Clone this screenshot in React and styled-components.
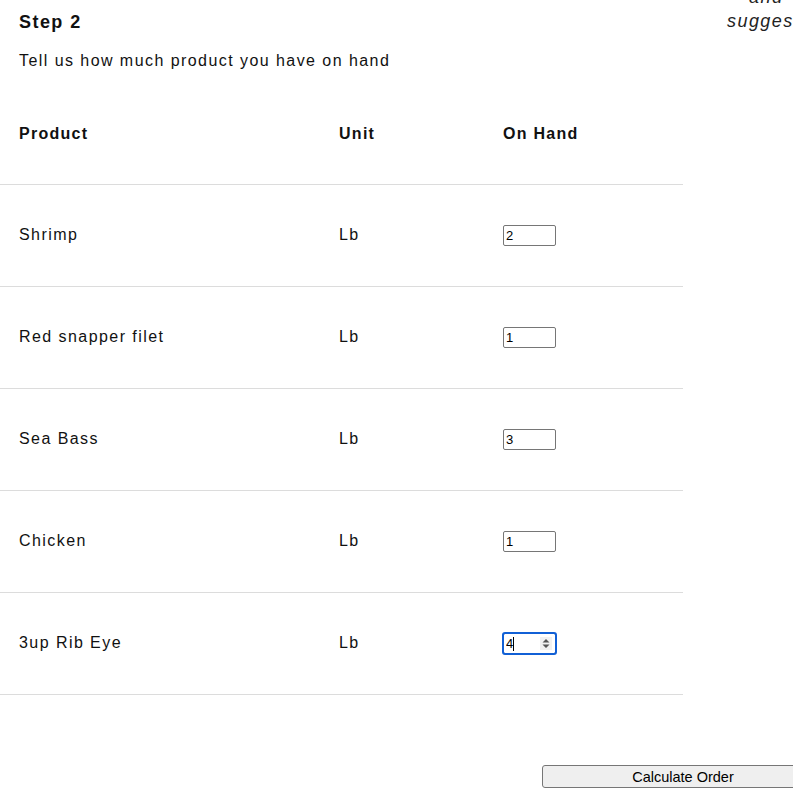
import styled, { createGlobalStyle } from 'styled-components'

const GlobalStyle = createGlobalStyle`
  html, body {
    margin: 0;
    padding: 0;
    overflow: hidden;
    background: #fff;
  }
  body {
    font-family: "Liberation Sans", Arial, sans-serif;
    color: #111;
  }
`

const Page = styled.div`
  width: 1366px;
`

const Columns = styled.div`
  display: flex;
`

const Form = styled.section`
  width: 683px;
  flex: none;
`

const Title = styled.h2`
  margin: 11px 0 0;
  padding: 0 19px;
  font-size: 18px;
  line-height: 22px;
  font-weight: 700;
  letter-spacing: 0.08em;
`

const Lead = styled.p`
  margin: 16px 0 0;
  padding: 0 19px;
  font-size: 16px;
  line-height: 24px;
  letter-spacing: 0.09em;
`

const Table = styled.table`
  margin-top: 11px;
  width: 683px;
  border-collapse: collapse;
  table-layout: fixed;
  font-size: 16px;
  letter-spacing: 0.09em;
`

const Th = styled.th`
  box-sizing: border-box;
  width: ${p => p.$w}px;
  height: 100px;
  padding: 1px 19px 0;
  text-align: left;
  font-weight: 700;
  letter-spacing: 0.08em;
  border-bottom: 1px solid #dcdcdc;
`

const Td = styled.td`
  height: 101px;
  padding: 0 19px;
  border-bottom: 1px solid #dcdcdc;
`

const Field = styled.div`
  position: relative;
  display: inline-block;
  vertical-align: middle;
`

const Qty = styled.input`
  box-sizing: border-box;
  width: 53px;
  height: 21px;
  margin: 0;
  padding: 0 2px;
  font: 13px "Liberation Sans", Arial, sans-serif;
  color: #000;
  border: 1px solid #767676;
  border-radius: 2px;
  outline: ${p => (p.$active ? '2px solid #1160d6' : 'none')};
  outline-offset: -1px;
  -moz-appearance: textfield;

  &::-webkit-inner-spin-button,
  &::-webkit-outer-spin-button {
    -webkit-appearance: none;
    margin: 0;
  }
`

const Spinner = styled.svg`
  position: absolute;
  right: 4px;
  top: 4px;
  width: 12px;
  height: 13px;
  background: #f1f1f1;
  pointer-events: none;
`

const Caret = styled.span`
  position: absolute;
  left: 10px;
  top: 4px;
  width: 1px;
  height: 14px;
  background: #000;
`

const Aside = styled.aside`
  margin-top: -15px;
  padding-left: 44px;
  font-size: 18px;
  line-height: 24px;
  font-style: italic;
  letter-spacing: 0.08em;
  color: #222;
`

const AsideLine = styled.div`
  padding-left: ${p => p.$indent || 0}px;
  white-space: nowrap;
`

const Footer = styled.div`
  display: flex;
  justify-content: center;
  margin-top: 70px;
`

const Button = styled.button`
  width: 282px;
  height: 23px;
  padding: 1px 0 0;
  font: 14.5px "Liberation Sans", Arial, sans-serif;
  color: #000;
  background: #efefef;
  border: 1px solid #767676;
  border-radius: 3px;
`

const products = [
  { name: 'Shrimp', unit: 'Lb', qty: 2 },
  { name: 'Red snapper filet', unit: 'Lb', qty: 1 },
  { name: 'Sea Bass', unit: 'Lb', qty: 3 },
  { name: 'Chicken', unit: 'Lb', qty: 1 },
  { name: '3up Rib Eye', unit: 'Lb', qty: 4, active: true },
]

export default function App() {
  return (
    <Page>
      <GlobalStyle />
      <Columns>
        <Form>
          <Title>Step 2</Title>
          <Lead>Tell us how much product you have on hand</Lead>
          <Table>
            <thead>
              <tr>
                <Th $w={320}>Product</Th>
                <Th $w={164}>Unit</Th>
                <Th $w={199}>On Hand</Th>
              </tr>
            </thead>
            <tbody>
              {products.map(p => (
                <tr key={p.name}>
                  <Td>{p.name}</Td>
                  <Td>{p.unit}</Td>
                  <Td>
                    <Field>
                      <Qty type="number" defaultValue={p.qty} $active={p.active} />
                      {p.active && (
                        <>
                          <Caret />
                          <Spinner viewBox="0 0 12 13">
                            <path d="M6 2 L9.5 5.5 H2.5 Z M6 11 L2.5 7.5 H9.5 Z" fill="#555" />
                          </Spinner>
                        </>
                      )}
                    </Field>
                  </Td>
                </tr>
              ))}
            </tbody>
          </Table>
        </Form>
        <Aside>
          <AsideLine $indent={22}>and</AsideLine>
          <AsideLine>suggested order</AsideLine>
        </Aside>
      </Columns>
      <Footer>
        <Button type="button">Calculate Order</Button>
      </Footer>
    </Page>
  )
}
